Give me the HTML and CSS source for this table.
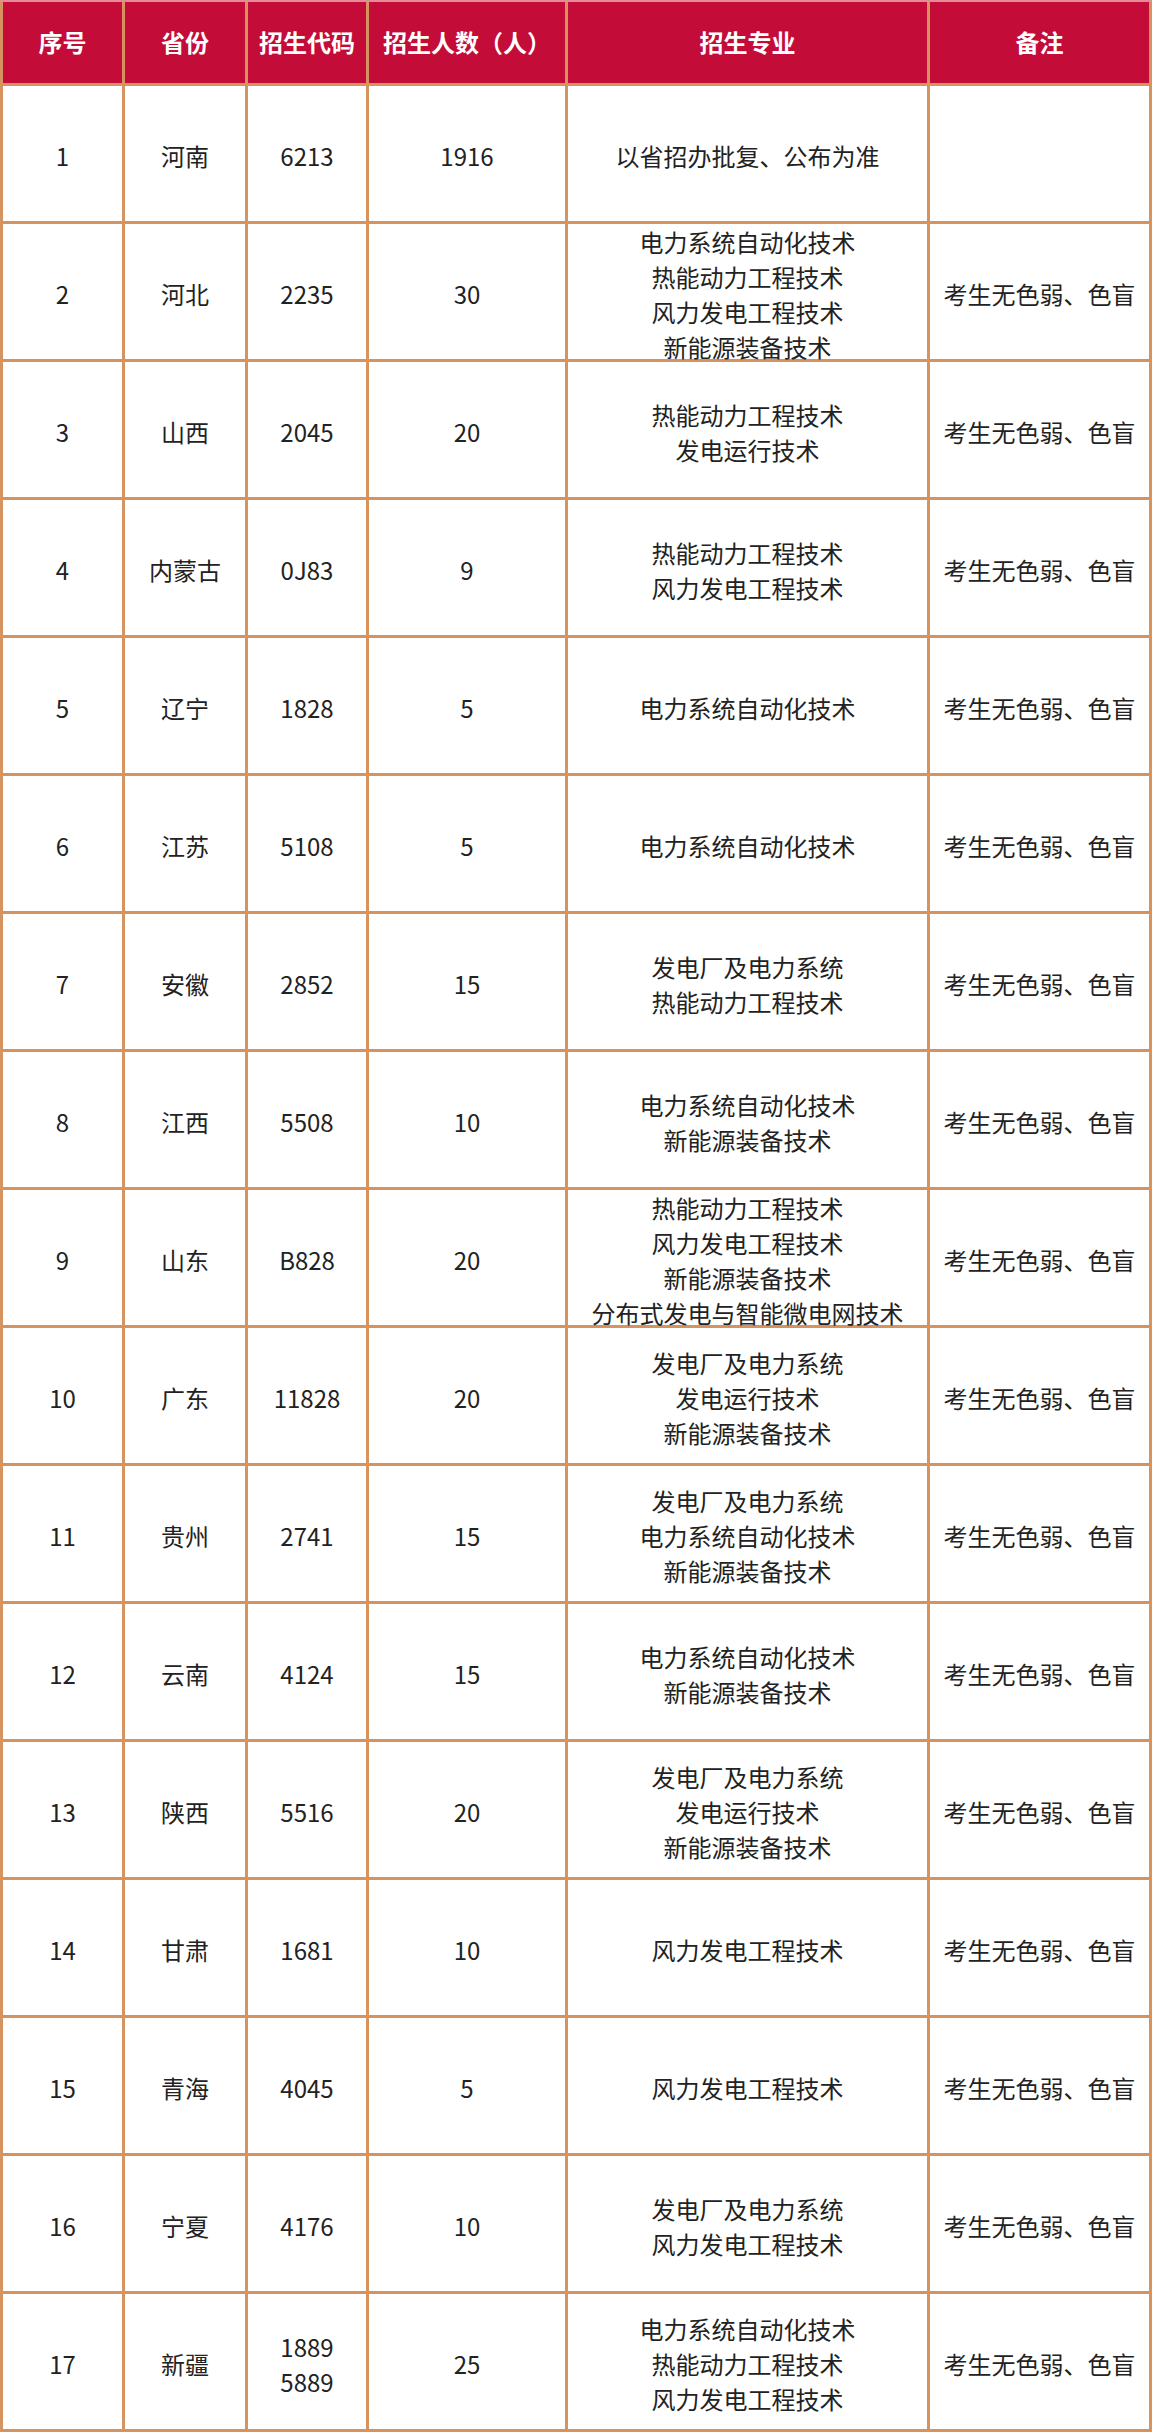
FILE: index.html
```html
<!DOCTYPE html>
<html lang="zh-CN">
<head>
<meta charset="utf-8">
<title>招生计划</title>
<link rel="stylesheet" href="styles.css">
</head>
<body>
<div class="table">
  <div class="hd">序号</div><div class="hd">省份</div><div class="hd">招生代码</div><div class="hd">招生人数（人）</div><div class="hd">招生专业</div><div class="hd">备注</div>

  <div class="c">1</div><div class="c">河南</div><div class="c">6213</div><div class="c">1916</div><div class="c">以省招办批复、公布为准</div><div class="c"></div>

  <div class="c">2</div><div class="c">河北</div><div class="c">2235</div><div class="c">30</div><div class="c">电力系统自动化技术<br>热能动力工程技术<br>风力发电工程技术<br>新能源装备技术</div><div class="c">考生无色弱、色盲</div>

  <div class="c">3</div><div class="c">山西</div><div class="c">2045</div><div class="c">20</div><div class="c">热能动力工程技术<br>发电运行技术</div><div class="c">考生无色弱、色盲</div>

  <div class="c">4</div><div class="c">内蒙古</div><div class="c">0J83</div><div class="c">9</div><div class="c">热能动力工程技术<br>风力发电工程技术</div><div class="c">考生无色弱、色盲</div>

  <div class="c">5</div><div class="c">辽宁</div><div class="c">1828</div><div class="c">5</div><div class="c">电力系统自动化技术</div><div class="c">考生无色弱、色盲</div>

  <div class="c">6</div><div class="c">江苏</div><div class="c">5108</div><div class="c">5</div><div class="c">电力系统自动化技术</div><div class="c">考生无色弱、色盲</div>

  <div class="c">7</div><div class="c">安徽</div><div class="c">2852</div><div class="c">15</div><div class="c">发电厂及电力系统<br>热能动力工程技术</div><div class="c">考生无色弱、色盲</div>

  <div class="c">8</div><div class="c">江西</div><div class="c">5508</div><div class="c">10</div><div class="c">电力系统自动化技术<br>新能源装备技术</div><div class="c">考生无色弱、色盲</div>

  <div class="c">9</div><div class="c">山东</div><div class="c">B828</div><div class="c">20</div><div class="c">热能动力工程技术<br>风力发电工程技术<br>新能源装备技术<br>分布式发电与智能微电网技术</div><div class="c">考生无色弱、色盲</div>

  <div class="c">10</div><div class="c">广东</div><div class="c">11828</div><div class="c">20</div><div class="c">发电厂及电力系统<br>发电运行技术<br>新能源装备技术</div><div class="c">考生无色弱、色盲</div>

  <div class="c">11</div><div class="c">贵州</div><div class="c">2741</div><div class="c">15</div><div class="c">发电厂及电力系统<br>电力系统自动化技术<br>新能源装备技术</div><div class="c">考生无色弱、色盲</div>

  <div class="c">12</div><div class="c">云南</div><div class="c">4124</div><div class="c">15</div><div class="c">电力系统自动化技术<br>新能源装备技术</div><div class="c">考生无色弱、色盲</div>

  <div class="c">13</div><div class="c">陕西</div><div class="c">5516</div><div class="c">20</div><div class="c">发电厂及电力系统<br>发电运行技术<br>新能源装备技术</div><div class="c">考生无色弱、色盲</div>

  <div class="c">14</div><div class="c">甘肃</div><div class="c">1681</div><div class="c">10</div><div class="c">风力发电工程技术</div><div class="c">考生无色弱、色盲</div>

  <div class="c">15</div><div class="c">青海</div><div class="c">4045</div><div class="c">5</div><div class="c">风力发电工程技术</div><div class="c">考生无色弱、色盲</div>

  <div class="c">16</div><div class="c">宁夏</div><div class="c">4176</div><div class="c">10</div><div class="c">发电厂及电力系统<br>风力发电工程技术</div><div class="c">考生无色弱、色盲</div>

  <div class="c">17</div><div class="c">新疆</div><div class="c">1889<br>5889</div><div class="c">25</div><div class="c">电力系统自动化技术<br>热能动力工程技术<br>风力发电工程技术</div><div class="c">考生无色弱、色盲</div>
</div>
</body>
</html>
```

FILE: styles.css
```css
html, body {
  margin: 0;
  padding: 0;
  background: #ffffff;
}

.table {
  width: 1152px;
  box-sizing: border-box;
  display: grid;
  grid-template-columns: 119px 120px 118px 196px 359px 219px;
  grid-template-rows: 81px repeat(17, 135px);
  gap: 3px;
  padding: 0 3px 3px 3px;
  border-top: 2px solid #e48a98;
  background: #d6935f;
  font-family: "Noto Sans CJK SC", "Noto Sans", sans-serif;
  font-size: 24px;
}

.hd {
  background: #c40c38;
  color: #ffffff;
  font-weight: 700;
  display: flex;
  align-items: center;
  justify-content: center;
  text-align: center;
  white-space: nowrap;
  line-height: 1;
  padding-bottom: 2px;
}

.c {
  background: #ffffff;
  color: #222222;
  display: flex;
  align-items: center;
  justify-content: center;
  text-align: center;
  white-space: nowrap;
  line-height: 35px;
  padding-top: 4px;
  box-sizing: border-box;
  overflow: visible;
}
```
